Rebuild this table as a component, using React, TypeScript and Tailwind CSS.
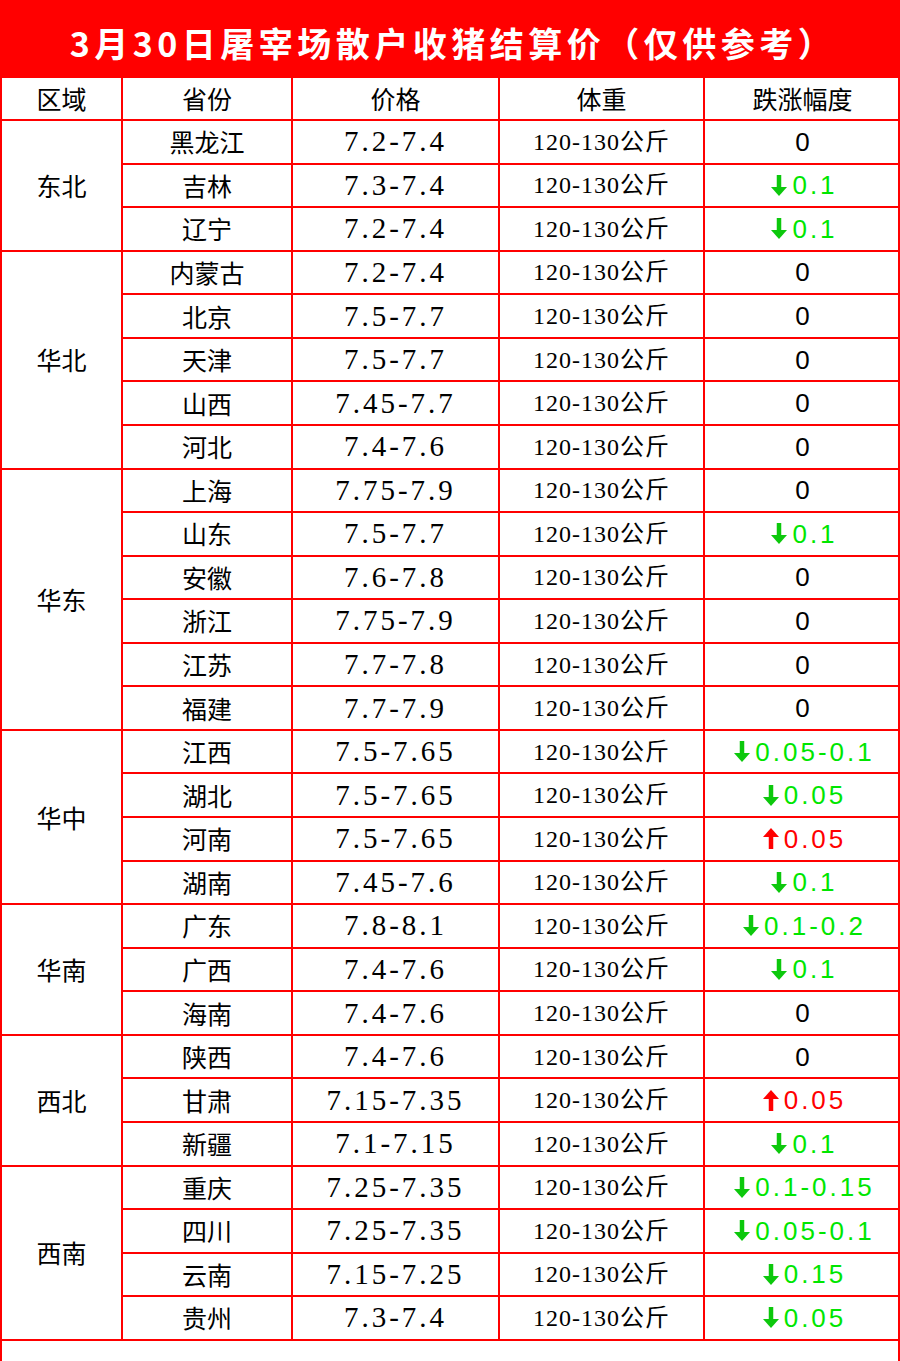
import React from "react";

type Change = { dir: "none" | "down" | "up"; text: string };
type Row = { prov: string; price: string; change: Change };
type Region = { name: string; rows: Row[] };

const z: Change = { dir: "none", text: "0" };
const d = (t: string): Change => ({ dir: "down", text: t });
const u = (t: string): Change => ({ dir: "up", text: t });

const data: Region[] = [
  {
    name: "东北",
    rows: [
      { prov: "黑龙江", price: "7.2-7.4", change: z },
      { prov: "吉林", price: "7.3-7.4", change: d("0.1") },
      { prov: "辽宁", price: "7.2-7.4", change: d("0.1") },
    ],
  },
  {
    name: "华北",
    rows: [
      { prov: "内蒙古", price: "7.2-7.4", change: z },
      { prov: "北京", price: "7.5-7.7", change: z },
      { prov: "天津", price: "7.5-7.7", change: z },
      { prov: "山西", price: "7.45-7.7", change: z },
      { prov: "河北", price: "7.4-7.6", change: z },
    ],
  },
  {
    name: "华东",
    rows: [
      { prov: "上海", price: "7.75-7.9", change: z },
      { prov: "山东", price: "7.5-7.7", change: d("0.1") },
      { prov: "安徽", price: "7.6-7.8", change: z },
      { prov: "浙江", price: "7.75-7.9", change: z },
      { prov: "江苏", price: "7.7-7.8", change: z },
      { prov: "福建", price: "7.7-7.9", change: z },
    ],
  },
  {
    name: "华中",
    rows: [
      { prov: "江西", price: "7.5-7.65", change: d("0.05-0.1") },
      { prov: "湖北", price: "7.5-7.65", change: d("0.05") },
      { prov: "河南", price: "7.5-7.65", change: u("0.05") },
      { prov: "湖南", price: "7.45-7.6", change: d("0.1") },
    ],
  },
  {
    name: "华南",
    rows: [
      { prov: "广东", price: "7.8-8.1", change: d("0.1-0.2") },
      { prov: "广西", price: "7.4-7.6", change: d("0.1") },
      { prov: "海南", price: "7.4-7.6", change: z },
    ],
  },
  {
    name: "西北",
    rows: [
      { prov: "陕西", price: "7.4-7.6", change: z },
      { prov: "甘肃", price: "7.15-7.35", change: u("0.05") },
      { prov: "新疆", price: "7.1-7.15", change: d("0.1") },
    ],
  },
  {
    name: "西南",
    rows: [
      { prov: "重庆", price: "7.25-7.35", change: d("0.1-0.15") },
      { prov: "四川", price: "7.25-7.35", change: d("0.05-0.1") },
      { prov: "云南", price: "7.15-7.25", change: d("0.15") },
      { prov: "贵州", price: "7.3-7.4", change: d("0.05") },
    ],
  },
];

function ArrowDown({ color }: { color: string }) {
  return (
    <svg width="18" height="21" viewBox="0 0 18 21" className="shrink-0">
      <rect x="6.75" y="0" width="4.5" height="13" fill={color} />
      <polygon points="1,12 17,12 9,21" fill={color} />
    </svg>
  );
}

function ArrowUp({ color }: { color: string }) {
  return (
    <svg width="18" height="21" viewBox="0 0 18 21" className="shrink-0">
      <rect x="6.75" y="8" width="4.5" height="13" fill={color} />
      <polygon points="1,9 17,9 9,0" fill={color} />
    </svg>
  );
}

function ChangeCell({ c }: { c: Change }) {
  if (c.dir === "none") {
    return (
      <span className="font-['Liberation_Sans',Arial,sans-serif] text-[26px] text-black">
        0
      </span>
    );
  }
  const isUp = c.dir === "up";
  return (
    <span className="inline-flex items-center gap-[4px] pl-[3px]">
      {isUp ? <ArrowUp color="#ff0000" /> : <ArrowDown color="#0cc80c" />}
      <span
        className={
          "font-['Liberation_Sans',Arial,sans-serif] text-[26px] tracking-[3px] " +
          (isUp ? "text-[#ff0000]" : "text-[#00e600]")
        }
      >
        {c.text}
      </span>
    </span>
  );
}

const cjk = "font-['Noto_Sans_CJK_SC',sans-serif]";
const td = "border-2 border-[#ff0000] p-0 text-center align-middle";

export default function App() {
  return (
    <div className="w-[900px] h-[1361px] bg-white border-x-2 border-[#ff0000] flex flex-col">
      <div className="h-[76px] bg-[#ff0000] flex items-center justify-center pt-[9px] pl-[6px] -mx-[2px]">
        <span className="font-['Noto_Sans_CJK_SC',sans-serif] font-bold text-white text-[34px] tracking-[4.5px] leading-none">
          3月30日屠宰场散户收猪结算价（仅供参考）
        </span>
      </div>
      <table className="table-fixed border-collapse w-[900px] -mx-[2px] text-black">
        <colgroup>
          <col className="w-[121px]" />
          <col className="w-[170px]" />
          <col className="w-[207px]" />
          <col className="w-[205px]" />
          <col className="w-[197px]" />
        </colgroup>
        <thead>
          <tr className="h-[43px]">
            {["区域", "省份", "价格", "体重", "跌涨幅度"].map((h) => (
              <th key={h} className={`${td} ${cjk} font-normal text-[25px] leading-none`}>
                {h}
              </th>
            ))}
          </tr>
        </thead>
        <tbody>
          {data.map((region) =>
            region.rows.map((r, i) => (
              <tr key={region.name + r.prov} className="h-[43.57px]">
                {i === 0 && (
                  <td rowSpan={region.rows.length} className={`${td} ${cjk} text-[25px] leading-none`}>
                    {region.name}
                  </td>
                )}
                <td className={`${td} ${cjk} text-[25px] leading-none`}>{r.prov}</td>
                <td className={`${td} font-['Liberation_Serif',serif] text-[29px] tracking-[3px] leading-none`}>
                  {r.price}
                </td>
                <td className={`${td} font-['Liberation_Serif','Noto_Sans_CJK_SC',serif] text-[24px] tracking-[1px] leading-none`}>
                  120-130公斤
                </td>
                <td className={`${td} leading-none`}>
                  <ChangeCell c={r.change} />
                </td>
              </tr>
            ))
          )}
        </tbody>
      </table>
      <div className="flex-1" />
    </div>
  );
}
